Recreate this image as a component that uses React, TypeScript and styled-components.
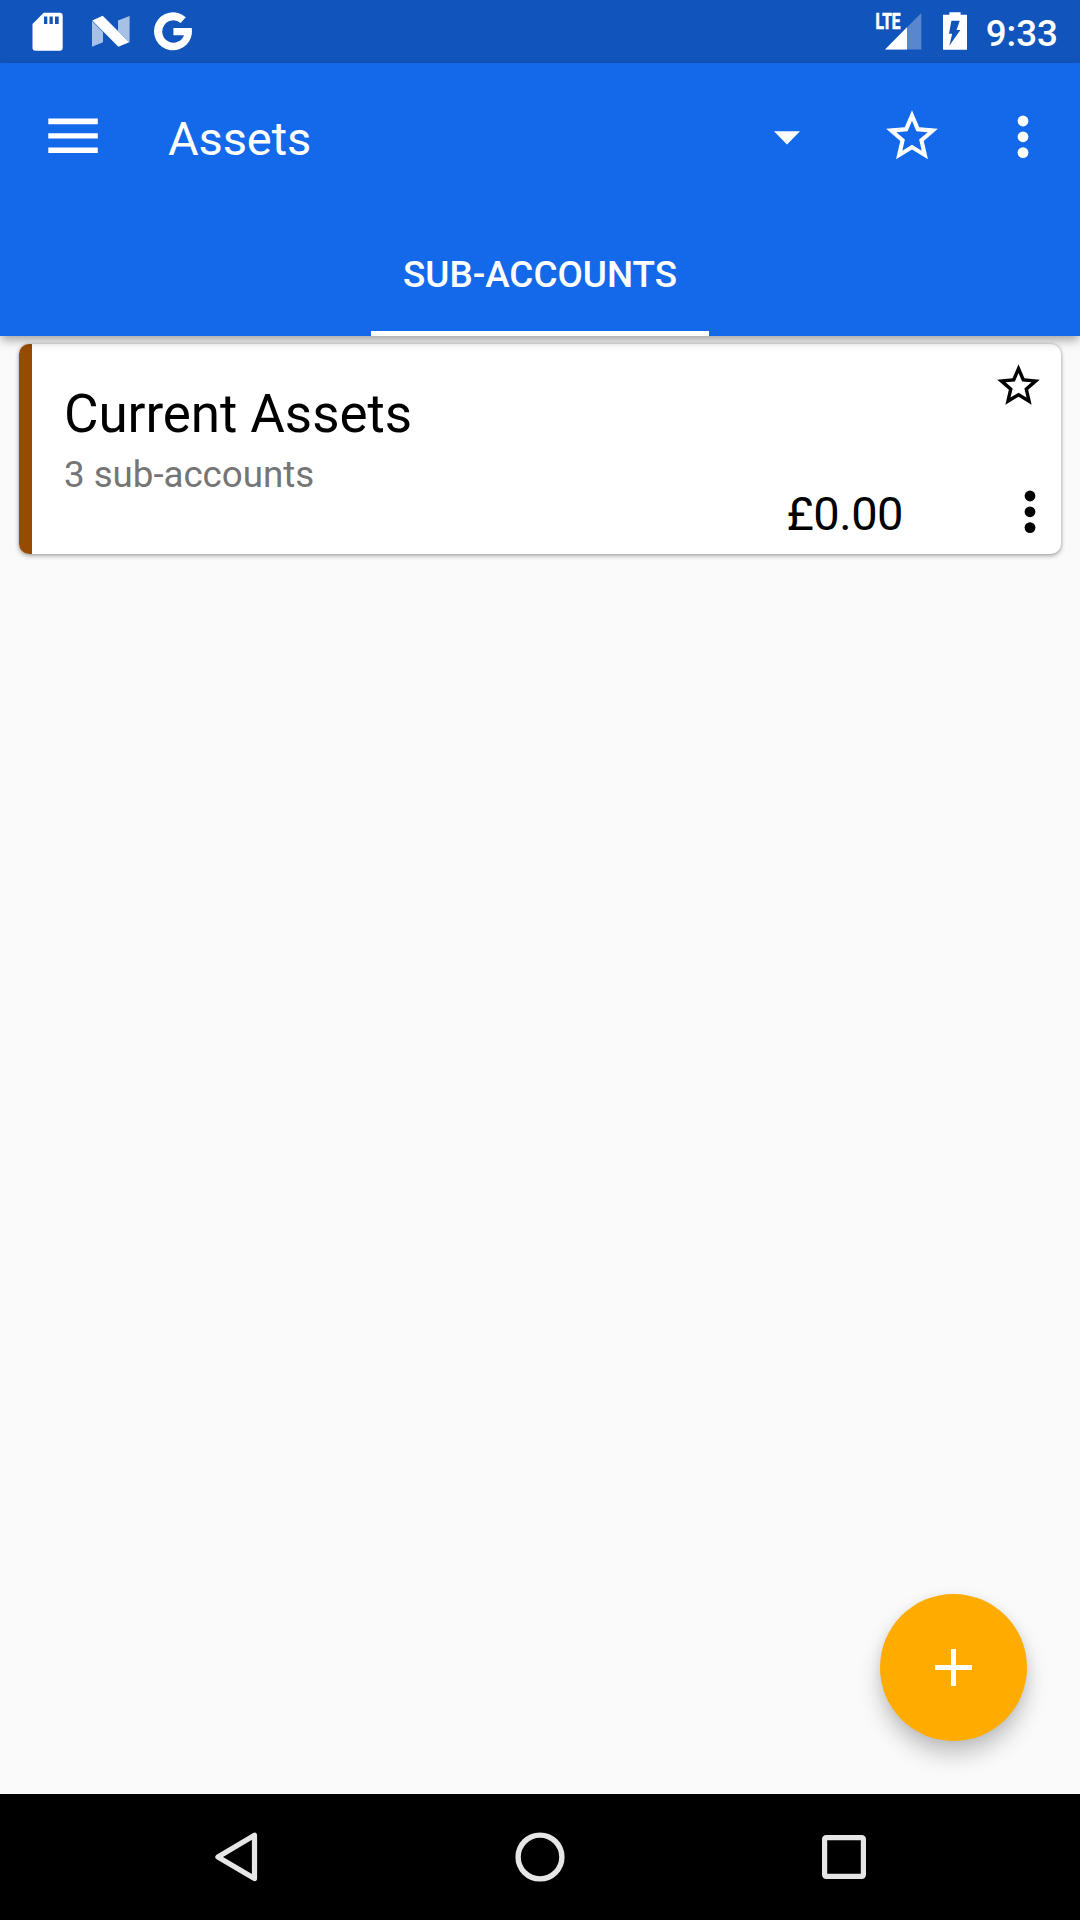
import React from "react";
import styled, { createGlobalStyle } from "styled-components";

const color = {
  statusBar: "#1154bc",
  primary: "#1469eb",
  surface: "#fafafa",
  accent: "#ffab00",
  account: "#964b00",
  navIcon: "#e6e6e6",
};

const GlobalStyle = createGlobalStyle`
  * { box-sizing: border-box; }
  body {
    margin: 0;
    font-family: Roboto, "Noto Sans", sans-serif;
    background: ${color.surface};
  }
`;

const Screen = styled.div`
  position: relative;
  display: flex;
  flex-direction: column;
  width: 1080px;
  height: 1920px;
  overflow: hidden;
  background: ${color.surface};
`;

const StatusBar = styled.div`
  display: flex;
  justify-content: space-between;
  height: 63px;
  padding: 12px 22px 0 32px;
  background: ${color.statusBar};
  color: #fff;
`;

const Notifications = styled.div`
  display: flex;
`;

const SystemIcons = styled.div`
  display: flex;
`;

const Clock = styled.span`
  margin: 0 0 0 18px;
  font-size: 36.75px;
  font-weight: 500;
  line-height: 43px;
`;

const Glyph = styled.svg<{ $gap?: number }>`
  display: block;
  flex: none;
  margin-right: ${(p) => p.$gap ?? 0}px;
  fill: currentColor;
  overflow: visible;
`;

const Outline = styled(Glyph)`
  fill: none;
  stroke: currentColor;
  stroke-linejoin: round;
`;

const AppBar = styled.header`
  position: relative;
  z-index: 1;
  display: flex;
  flex-direction: column;
  height: 273px;
  background: ${color.primary};
  color: #fff;
  box-shadow: 0 5px 10px -1px rgba(0, 0, 0, 0.36);
`;

const Toolbar = styled.div`
  display: flex;
  align-items: center;
  height: 147px;
  padding: 0 51.5px 0 48px;
`;

const IconButton = styled.button<{ $ml?: number; $mr?: number; $mt?: number }>`
  display: flex;
  margin: ${(p) => p.$mt ?? 0}px ${(p) => p.$mr ?? 0}px 0 ${(p) => p.$ml ?? 0}px;
  padding: 0;
  border: 0;
  background: none;
  color: inherit;
`;

const Title = styled.h1`
  flex: 1;
  margin: 5px 0 0 70px;
  font-size: 47px;
  font-weight: 400;
  line-height: 56px;
  letter-spacing: -0.1px;
`;

const Tabs = styled.nav`
  display: flex;
  justify-content: center;
  height: 126px;
`;

const Tab = styled.div`
  display: flex;
  align-items: center;
  justify-content: center;
  width: 338px;
  padding-top: 7px;
  border-bottom: 5px solid #fff;
  font-size: 36.85px;
  font-weight: 500;
  line-height: 43px;
`;

const Content = styled.main`
  flex: 1;
  padding: 8px 19px;
`;

const Card = styled.article`
  display: flex;
  height: 210px;
  border-radius: 10px;
  background: #fff;
  color: #000;
  box-shadow: 0 2px 5px rgba(0, 0, 0, 0.3), 0 0 3px rgba(0, 0, 0, 0.2);
`;

const Stripe = styled.div`
  width: 13px;
  border-radius: 10px 0 0 10px;
  background: ${color.account};
`;

const Info = styled.div`
  flex: 1;
  padding: 40px 0 0 32px;
`;

const AccountName = styled.h2`
  margin: 0;
  font-size: 53px;
  font-weight: 400;
  line-height: 61px;
  letter-spacing: -0.08px;
`;

const AccountNote = styled.p`
  margin: 8px 0 0;
  color: #757575;
  font-size: 36.75px;
  line-height: 43px;
  letter-spacing: -0.05px;
`;

const Balance = styled.div`
  align-self: flex-end;
  margin-bottom: 12px;
  font-size: 47px;
  line-height: 56px;
  letter-spacing: -0.5px;
`;

const CardActions = styled.div`
  display: flex;
  flex-direction: column;
  align-items: flex-end;
  justify-content: space-between;
  width: 158px;
  padding: 16px 16.7px 20px 0;
`;

const Fab = styled.button`
  position: absolute;
  right: 53px;
  bottom: 179px;
  display: flex;
  align-items: center;
  justify-content: center;
  width: 147px;
  height: 147px;
  padding: 0;
  border: 0;
  border-radius: 50%;
  background: ${color.accent};
  color: #fff;
  box-shadow: 0 14px 22px rgba(0, 0, 0, 0.21), 0 2px 12px rgba(0, 0, 0, 0.07);
`;

const NavBar = styled.footer`
  display: flex;
  align-items: center;
  justify-content: space-between;
  height: 126px;
  padding: 0 214px 0 215px;
  background: #000;
  color: ${color.navIcon};
`;

const SdCardIcon = () => (
  <Glyph $gap={28} width="32" height="40" viewBox="32 12 32 40">
    <path
      fillRule="evenodd"
      d="M43.7 12.7H59.7a3 3 0 0 1 3 3V47.7a3 3 0 0 1-3 3H35.5a3 3 0 0 1-3-3V24ZM44 16.5v7.6h3.3v-7.6ZM49.5 16.5v7.6h3.3v-7.6ZM55 16.5v7.6h3.7v-7.6Z"
    />
  </Glyph>
);

const NougatIcon = () => (
  <Glyph $gap={24} width="38" height="40" viewBox="92 12 38 40">
    <path opacity="0.63" d="M92 21 103 32V42.2L92 46.7ZM118 20.5 129.6 16V42.5L118 31Z" />
    <path d="M92.2 20.5 102.7 15.8 129.2 42.3 118.4 46.8Z" />
  </Glyph>
);

const GoogleIcon = () => (
  <Glyph width="39" height="40" viewBox="154 12 39 40">
    <path d="M185.8 17.3 180.6 22.9A11.2 11.2 0 1 0 184 35.2H173.4V28.1H191.7A19 19 0 1 1 185.8 17.3Z" />
  </Glyph>
);

const SignalIcon = () => (
  <Glyph $gap={21} width="46" height="40" viewBox="876 12 46 40">
    <path opacity="0.3" d="M921.3 13V49.4H885Z" />
    <path d="M907 27.3V49.4H885Z" />
    <text
      x="875.6"
      y="29"
      fontSize="21.5"
      fontWeight="700"
      stroke="currentColor"
      strokeWidth="0.7"
      textLength="25"
      lengthAdjust="spacingAndGlyphs"
    >
      LTE
    </text>
  </Glyph>
);

const BatteryIcon = () => (
  <Glyph width="25" height="40" viewBox="943 12 25 40">
    <path
      fillRule="evenodd"
      d="M949.4 12.2H960.6V14.8H967V49.8H943V14.8H949.4ZM951.4 20.8 949 33.8H952.2L949.3 45.7 960.4 29.9H956.6L959.7 20.8Z"
    />
  </Glyph>
);

const MenuIcon = () => (
  <Glyph width="50" height="36" viewBox="0 0 50 36">
    <path d="M.3.6h49.5v5.6H.3zM.3 15.2h49.5v5.4H.3zM.3 29.4h49.5V35H.3z" />
  </Glyph>
);

const DropdownIcon = () => (
  <Glyph width="26" height="14" viewBox="0 0 26 14">
    <path d="M0 .3H26L13 13.5Z" />
  </Glyph>
);

const StarIcon = ({ size }: { size: number }) => (
  <Glyph width={size} height={size} viewBox="0 0 24 24">
    <path d="M22 9.24l-7.19-.62L12 2 9.19 8.63 2 9.24l5.46 4.73L5.82 21 12 17.27 18.18 21l-1.63-7.03L22 9.24zM12 15.4l-3.76 2.27 1-4.28-3.32-2.88 4.38-.38L12 6.1l1.71 4.04 4.38.38-3.32 2.88 1 4.28L12 15.4z" />
  </Glyph>
);

const MoreIcon = () => (
  <Glyph width="12" height="44" viewBox="0 0 12 44">
    <circle cx="6" cy="6" r="5.4" />
    <circle cx="6" cy="21.8" r="5.4" />
    <circle cx="6" cy="37.6" r="5.4" />
  </Glyph>
);

const AddIcon = () => (
  <Glyph width="37" height="37" viewBox="0 0 37 37">
    <path d="M16 0h5v16h16v5H21v16h-5V21H0v-5h16Z" />
  </Glyph>
);

const BackIcon = () => (
  <Outline width="43" height="50" viewBox="0 0 43 50" strokeWidth="5.2">
    <path d="M39.5 3.2V46.6L2.9 25Z" />
  </Outline>
);

const HomeIcon = () => (
  <Outline width="50" height="50" viewBox="0 0 50 50" strokeWidth="5.4">
    <circle cx="25" cy="25" r="21.9" />
  </Outline>
);

const RecentsIcon = () => (
  <Outline width="44" height="44" viewBox="0 0 44 44" strokeWidth="5.2">
    <rect x="2.6" y="2.6" width="38.8" height="38.8" rx="1.6" />
  </Outline>
);

export default function App() {
  return (
    <Screen>
      <GlobalStyle />
      <StatusBar>
        <Notifications>
          <SdCardIcon />
          <NougatIcon />
          <GoogleIcon />
        </Notifications>
        <SystemIcons>
          <SignalIcon />
          <BatteryIcon />
          <Clock>9:33</Clock>
        </SystemIcons>
      </StatusBar>

      <AppBar>
        <Toolbar>
          <IconButton aria-label="Open menu" $mt={-2}>
            <MenuIcon />
          </IconButton>
          <Title>Assets</Title>
          <IconButton aria-label="Choose account" $mt={2}>
            <DropdownIcon />
          </IconButton>
          <IconButton aria-label="Favourite" $ml={81} $mt={-2}>
            <StarIcon size={62} />
          </IconButton>
          <IconButton aria-label="More options" $ml={73.5} $mt={1}>
            <MoreIcon />
          </IconButton>
        </Toolbar>
        <Tabs>
          <Tab>SUB-ACCOUNTS</Tab>
        </Tabs>
      </AppBar>

      <Content>
        <Card>
          <Stripe />
          <Info>
            <AccountName>Current Assets</AccountName>
            <AccountNote>3 sub-accounts</AccountNote>
          </Info>
          <Balance>£0.00</Balance>
          <CardActions>
            <IconButton aria-label="Favourite account">
              <StarIcon size={51} />
            </IconButton>
            <IconButton aria-label="Account options" $mr={8.3}>
              <MoreIcon />
            </IconButton>
          </CardActions>
        </Card>
      </Content>

      <Fab aria-label="Add account">
        <AddIcon />
      </Fab>

      <NavBar>
        <BackIcon />
        <HomeIcon />
        <RecentsIcon />
      </NavBar>
    </Screen>
  );
}
